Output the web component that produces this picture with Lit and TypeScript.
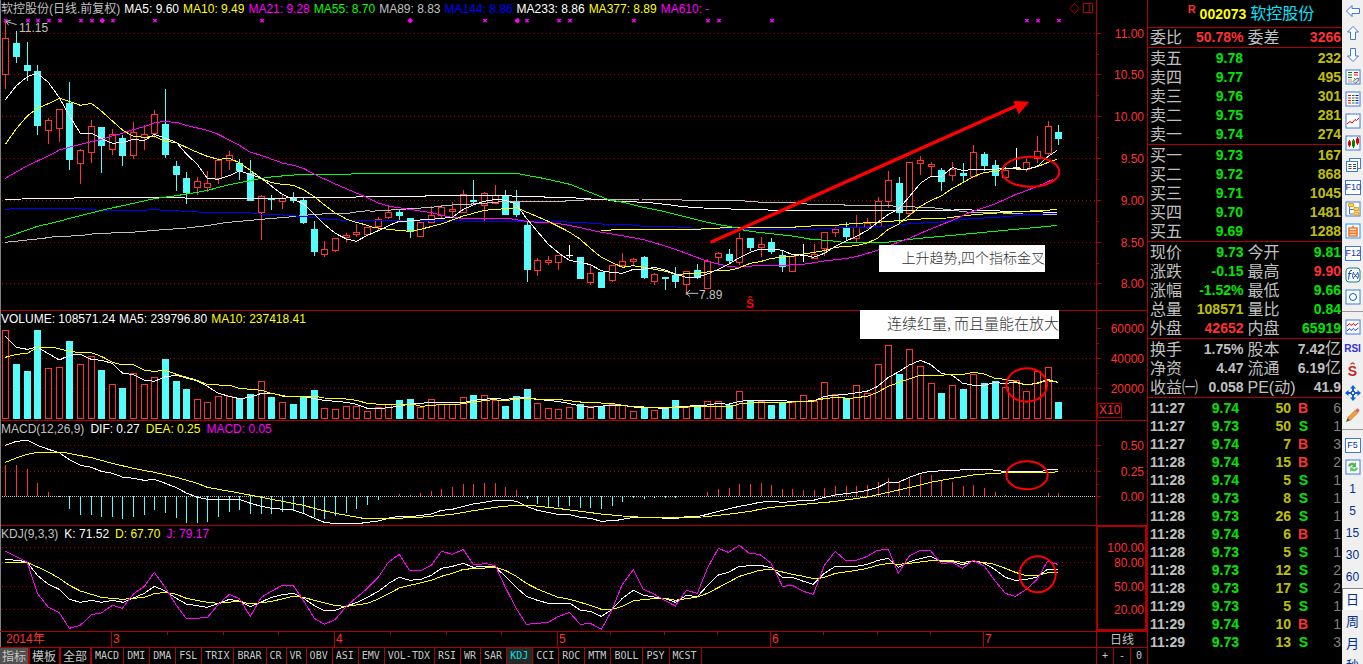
import { LitElement, html, svg, css } from 'lit';
import { customElement } from 'lit/decorators.js';
import { classMap } from 'lit/directives/class-map.js';

/* Every plot is drawn on a grid of three units to the pixel. */
const PLOT_W = 3288;
const barX = (i: number) => Math.floor(5.913 + 10.636 * i) * 3 + 1.5;

type Kind = 'r' | 'c' | 'w';
/* kind, high, body top, body bottom, low */
type Candle = [Kind, number, number, number, number];

const CANDLES: Candle[] = [
  ['r', 65, 115, 223, 266], ['c', 94, 130, 170, 188], ['c', 126, 195, 212, 242], ['c', 195, 213, 377, 404],
  ['r', 354, 361, 391, 431], ['r', 328, 328, 385, 425], ['c', 246, 309, 479, 509], ['r', 448, 451, 490, 551],
  ['r', 360, 379, 457, 488], ['c', 381, 381, 437, 518], ['r', 388, 403, 448, 464], ['c', 406, 415, 467, 497],
  ['r', 366, 397, 466, 476], ['r', 375, 403, 412, 449], ['r', 330, 343, 401, 413], ['c', 267, 373, 464, 473],
  ['c', 483, 498, 524, 572], ['c', 516, 534, 580, 611], ['r', 531, 544, 562, 584], ['r', 513, 550, 562, 577],
  ['r', 475, 482, 535, 551], ['r', 453, 466, 481, 509], ['c', 477, 489, 514, 539], ['c', 480, 519, 602, 602],
  ['r', 585, 589, 637, 719], ['c', 585, 594, 599, 629], ['r', 585, 595, 604, 626], ['c', 576, 592, 602, 608],
  ['c', 594, 600, 668, 671], ['c', 663, 687, 755, 767], ['r', 723, 748, 764, 770], ['r', 714, 715, 751, 755],
  ['r', 700, 706, 713, 726], ['r', 671, 697, 703, 710], ['r', 682, 683, 703, 706], ['r', 651, 658, 680, 690],
  ['r', 618, 637, 653, 656], ['c', 629, 636, 647, 659], ['c', 654, 654, 695, 713], ['r', 667, 667, 709, 709],
  ['r', 618, 646, 668, 670], ['r', 621, 622, 647, 653], ['r', 606, 628, 635, 653], ['r', 570, 583, 637, 640],
  ['c', 540, 600, 605, 614], ['r', 576, 580, 616, 662], ['r', 555, 585, 611, 613], ['c', 570, 585, 644, 644],
  ['c', 570, 604, 644, 650], ['c', 666, 675, 809, 846], ['r', 775, 781, 811, 829], ['r', 768, 781, 788, 794],
  ['r', 765, 766, 788, 809], ['w', 735, 766, 766, 775], ['c', 771, 771, 836, 836], ['r', 795, 820, 847, 854],
  ['c', 816, 816, 863, 863], ['r', 796, 796, 841, 847], ['r', 759, 784, 796, 803], ['r', 773, 778, 784, 796],
  ['c', 768, 771, 833, 836], ['r', 818, 823, 845, 854], ['c', 831, 831, 838, 869], ['c', 801, 825, 845, 863],
  ['r', 814, 814, 853, 875], ['c', 792, 810, 833, 837], ['r', 778, 784, 865, 866], ['r', 756, 760, 773, 794],
  ['c', 747, 763, 783, 790], ['r', 700, 715, 787, 794], ['c', 714, 714, 743, 754], ['r', 711, 734, 742, 770],
  ['c', 714, 726, 755, 762], ['c', 753, 765, 800, 815], ['r', 768, 768, 814, 814], ['w', 732, 766, 766, 785],
  ['r', 732, 762, 776, 777], ['r', 697, 697, 745, 768], ['r', 682, 688, 698, 710], ['c', 666, 681, 710, 719],
  ['r', 645, 682, 716, 728], ['r', 655, 671, 683, 686], ['r', 591, 604, 680, 680], ['r', 513, 541, 605, 623],
  ['c', 531, 549, 638, 671], ['r', 487, 487, 640, 647], ['r', 468, 481, 490, 524], ['r', 486, 493, 499, 532],
  ['c', 504, 510, 545, 572], ['r', 487, 508, 527, 542], ['c', 489, 519, 528, 545], ['r', 435, 457, 530, 530],
  ['c', 456, 462, 498, 512], ['c', 480, 495, 528, 557], ['r', 500, 512, 532, 534], ['w', 444, 502, 502, 508],
  ['r', 476, 487, 508, 515], ['r', 408, 454, 475, 490], ['r', 363, 379, 461, 468], ['c', 375, 396, 417, 434],
];

const VOLUME_TOPS = [
  61, 162, 183, 60, 175, 172, 93, 163, 139, 180, 223, 234, 190, 223, 202, 147, 213, 237, 268, 277,
  259, 258, 267, 252, 214, 261, 277, 282, 262, 240, 295, 298, 289, 289, 304, 292, 283, 270, 267, 292,
  268, 283, 283, 262, 255, 256, 270, 288, 258, 237, 280, 295, 298, 292, 282, 290, 288, 283, 286, 304,
  291, 301, 294, 270, 292, 285, 274, 274, 285, 244, 273, 274, 285, 278, 277, 256, 274, 217, 253, 264,
  226, 250, 163, 106, 192, 118, 169, 220, 249, 226, 237, 193, 219, 213, 232, 211, 244, 184, 172, 276,
];
const VOLUME_DOWN = new Set([
  1, 2, 3, 6, 9, 11, 15, 16, 17, 22, 23, 25, 27, 28, 29, 37, 38, 44, 47, 48, 49, 54, 56, 60, 62, 63, 65,
  68, 70, 72, 73, 79, 84, 88, 90, 92, 93, 99,
]);

const MACD_ENDS = [
  465, 465, 477, 519, 546, 560, 597, 615, 615, 621, 621, 627, 621, 615, 600, 609, 624, 639, 639, 636,
  621, 606, 600, 612, 612, 612, 606, 603, 609, 621, 627, 618, 609, 597, 585, 570, 559, 552, 555, 549,
  543, 537, 531, 521, 521, 519, 519, 531, 540, 567, 582, 592, 591, 588, 594, 594, 597, 588, 576, 564,
  567, 563, 564, 563, 559, 557, 546, 537, 534, 521, 521, 519, 525, 537, 537, 540, 540, 534, 528, 528,
  528, 525, 516, 504, 513, 504, 495, 495, 511, 516, 528, 525, 534, 546, 555, 559, 559, 557, 549, 549,
];

/* A curve is stored in sections, each with its own x origin. */
type Section = [number, string];
const curve = (...sections: Section[]): string => {
  const out: string[] = [];
  let last = -1;
  for (const [origin, text] of sections) {
    for (const pair of text.split(' ')) {
      const [x, y] = pair.split(',').map(Number);
      if (x + origin <= last) continue;
      last = x + origin;
      out.push(`${last},${y}`);
    }
  }
  return out.join(' ');
};

interface Line { tone: string; points: string; }

const PRICE_LINES: Line[] = [
  { tone: 'silver', points: curve(
    [0, '16,727 130,715 163,710 240,707 290,700 380,698 478,690 560,684 622,677 676,668 751,661 830,654 890,649 940,643 1050,639 1080,634 1109,632'],
    [1110, '0,634 80,629 184,622 230,616 280,613 330,611 406,604 580,604 600,601 730,598 810,597 930,598 940,601 1105,601'],
    [2220, '0,602 80,608 175,609 210,613 300,613 320,616 445,616 475,620 570,622 600,626 640,631 690,637 730,637 820,640 865,643 952,643']) },
  { tone: 'white', points: curve(
    [0, '16,598 65,597 70,595 220,595 230,592 545,592 560,595 840,595 895,592 1050,592 1109,589'],
    [1110, '0,589 165,589 170,586 420,586 430,589 510,589 530,592 610,592 625,596 700,598 740,604 830,607 895,614 940,620 1000,624 1060,626 1105,628'],
    [2220, '0,628 75,628 90,631 620,631 690,628 700,631 820,634 952,637']) },
  { tone: 'blue', points: curve(
    [0, '16,628 60,625 220,625 300,631 430,631 450,629 510,631 610,637 730,637 780,642 850,645 940,652 980,658 1040,661 1109,662'],
    [1110, '0,662 540,664 640,668 710,673 780,674 820,679 890,679 980,685 1105,688'],
    [2220, '0,688 220,688 250,685 370,682 440,678 500,672 600,666 680,657 800,650 870,643 952,641']) },
  { tone: 'yellow', points: curve(
    [1110, '694,692 740,689 990,688 1000,685 1105,683'],
    [2220, '0,683 160,682 180,679 285,676 350,670 410,667 500,660 570,655 620,654 680,646 730,642 830,635 952,629']) },
  { tone: 'green', points: curve(
    [0, '16,713 112,679 178,664 208,655 274,639 304,631 400,610 463,596 529,587 592,577 622,571 688,554 751,542 784,535 820,530 895,524 1050,524 1055,521 1109,520'],
    [1110, '0,520 440,520 470,526 520,535 600,553 660,577 715,599 760,607 820,622 880,634 916,643 1012,667 1075,679 1105,684'],
    [2220, '0,688 31,694 94,701 157,708 220,719 265,721 310,727 440,727 508,718 571,712 637,706 700,700 763,694 826,688 892,682 952,676']) },
  { tone: 'magenta', points: curve(
    [0, '16,535 82,497 145,468 178,450 241,433 304,418 337,408 370,399 400,389 433,380 463,369 490,364 535,368 559,376 622,391 655,403 718,436 751,457 784,466 847,489 880,496 910,505 943,523 1006,552 1069,579 1109,596'],
    [1110, '25,609 60,619 118,628 184,638 247,653 310,656 420,656 469,664 502,667 540,668 580,673 631,683 694,697 757,707 820,719 853,728 916,748 1012,784 1075,799 1105,802'],
    [2220, '0,801 61,796 127,796 190,793 253,783 316,776 349,770 412,751 475,727 508,715 541,700 604,674 637,661 690,637 763,613 826,584 859,572 892,559 940,538']) },
  { tone: 'yellow', points: curve(
    [0, '16,433 49,386 82,348 112,325 145,311 178,295 208,304 241,316 274,310 304,333 337,363 370,392 400,409 433,412 463,409 496,424 529,428 559,442 592,457 622,469 655,478 688,475 718,488 751,511 784,535 814,548 847,553 880,556 910,569 943,590 973,615 1006,639 1039,657 1069,667 1102,676'],
    [1110, '0,680 25,684 55,688 118,694 151,688 214,672 280,648 343,631 406,626 439,623 469,636 535,664 598,696 631,718 661,745 694,772 757,802 790,797 820,802 886,814 916,823 982,820 1045,811 1075,811 1105,805'],
    [2220, '0,802 31,790 61,785 94,775 157,769 190,762 253,752 286,742 349,737 382,729 412,715 445,688 475,673 508,646 541,619 571,602 604,588 637,565 667,549 700,530 733,517 763,515 796,506 859,508 892,500 922,488 952,478']) },
  { tone: 'white', points: curve(
    [0, '16,299 49,257 82,230 112,220 145,247 178,293 208,347 241,400 274,400 304,415 337,430 370,427 400,418 433,422 463,403 496,415 529,427 559,462 592,493 622,535 655,538 688,527 718,512 751,523 784,535 814,558 847,583 880,598 910,611 943,643 973,673 1006,700 1039,717 1069,724 1102,706'],
    [1110, '30,690 55,677 85,665 135,661 184,658 214,655 247,652 280,628 310,615 343,604 376,598 406,601 439,612 469,655 502,694 535,733 565,758 598,781 631,787 661,794 694,812 724,817 757,820 790,808 820,808 853,802 886,810 916,822 949,832 982,832 1012,822 1045,808 1075,793 1105,775'],
    [2220, '0,772 31,757 61,747 94,747 127,751 157,764 190,765 220,772 253,760 286,739 316,724 349,709 382,691 412,668 445,643 475,628 508,590 541,550 571,530 604,529 637,503 670,512 700,508 763,508 796,504 859,508 892,499 922,471 952,451']) },
];

const VOLUME_LINES: Line[] = [
  { tone: 'white', points: curve(
    [0, '16,79 49,112 82,118 112,111 145,131 178,150 208,136 241,133 274,148 304,151 337,160 367,189 400,194 433,210 463,214 496,200 529,196 559,204 592,213 622,229 655,250 688,259 718,266 751,262 784,250 814,249 847,258 880,261 910,259 943,266 973,271 1006,274 1039,277 1069,283 1102,295 1150,295 1168,292'],
    [1170, '28,289 60,282 91,280 124,277 225,277 250,271 310,265 346,268 409,262 442,268 502,274 535,280 570,288 601,292 660,286 700,286 730,291 826,295 856,291 889,289 922,286 952,285 985,280 1015,283 1048,274 1081,271 1109,271'],
    [2280, '0,271 70,271 97,276 160,274 193,259 256,253 320,244 352,230 385,202 415,186 448,165 481,151 511,163 544,190 577,196 607,219 640,226 673,226 703,218 736,220 766,217 799,225 832,219 862,208 893,217']) },
  { tone: 'yellow', points: curve(
    [0, '16,142 49,133 82,130 112,112 160,112 208,124 240,128 274,128 304,139 337,157 360,163 400,164 433,181 463,184 496,181 529,193 592,211 622,224 690,226 718,235 784,241 814,250 860,259 943,258 973,264 1039,267 1069,271 1102,280 1140,283 1168,283'],
    [1170, '70,283 95,289 150,284 204,283 265,274 310,269 343,272 379,268 409,265 442,268 520,270 580,277 660,280 700,286 730,290 826,293 930,290 1020,290 1048,282 1109,276'],
    [2280, '0,277 80,277 160,272 193,266 226,262 270,265 322,259 352,247 385,229 415,218 481,196 540,196 577,193 610,193 640,187 673,192 703,204 740,209 766,214 799,225 832,220 862,212 893,217']) },
];

const MACD_LINES: Line[] = [
  { tone: 'white', points: curve(
    [0, '16,406 49,394 82,391 112,406 145,418 178,428 208,449 241,466 274,472 304,484 337,490 367,501 400,505 433,511 463,508 496,520 529,533 559,549 592,562 622,568 718,568 751,580 784,589 814,595 880,600 910,610 943,625 973,637 1000,640 1080,640 1135,633 1168,624'],
    [1170, '28,619 70,619 124,612 154,601 187,598 220,589 250,582 283,577 316,571 360,571 379,574 409,589 442,601 502,613 540,614 571,622 601,625 634,634 680,631 730,622 860,625 889,620 922,620 952,613 985,604 1048,589 1081,583 1109,577'],
    [2280, '30,574 70,577 130,571 160,571 193,562 226,555 289,547 322,541 352,533 385,516 415,517 448,502 481,490 511,484 560,482 640,478 690,479 740,485 840,486 862,478 893,478']) },
  { tone: 'yellow', points: curve(
    [0, '16,457 49,444 82,433 112,427 200,429 274,443 337,460 400,475 463,487 529,502 592,520 622,532 718,549 784,562 847,574 910,586 943,595 1006,610 1090,625 1168,626'],
    [1170, '100,621 187,613 250,602 330,590 379,586 430,587 502,595 571,604 634,612 697,618 760,622 940,621 1020,612 1081,604 1109,598'],
    [2280, '34,592 97,586 220,575 322,561 385,547 481,525 511,517 577,505 640,495 700,490 766,487 880,487 893,484']) },
];

const KDJ_LINES: Line[] = [
  { tone: 'white', points: curve(
    [0, '16,748 60,752 82,757 112,796 145,823 178,838 208,868 241,877 274,871 304,877 337,871 370,877 400,864 433,850 463,829 496,843 529,865 559,882 622,892 655,880 688,868 718,873 751,890 784,876 814,862 847,854 880,850 910,864 943,887 973,902 1006,901 1040,888 1069,878 1102,862 1135,844 1168,819'],
    [1170, '28,802 60,811 95,807 124,796 154,775 187,769 220,760 250,772 283,768 316,771 346,799 379,832 409,859 442,871 475,880 540,880 571,901 601,904 634,919 664,900 697,865 730,841 760,856 826,866 856,877 889,856 922,860 952,827 985,795 1015,787 1048,769 1111,766'],
    [2280, '34,773 67,802 97,802 130,814 160,823 193,790 226,769 289,769 322,763 352,752 385,745 415,772 448,755 481,746 511,739 544,754 577,755 607,764 640,754 673,760 703,777 736,802 766,811 799,808 832,801 862,778 893,778']) },
  { tone: 'yellow', points: curve(
    [0, '16,757 82,757 145,786 178,805 208,826 241,843 304,862 367,868 433,862 463,851 496,847 529,853 559,865 622,877 655,880 720,873 740,880 780,879 820,873 880,859 910,862 943,871 1006,887 1040,889 1102,880 1135,867 1168,850'],
    [1170, '28,834 60,826 124,811 154,799 187,790 220,778 316,772 346,781 379,799 409,820 442,837 502,861 540,868 601,886 634,898 670,897 700,888 730,872 790,866 826,865 856,871 922,861 952,850 1015,817 1048,799 1109,781'],
    [2280, '34,778 97,793 130,799 165,807 193,802 226,790 289,781 322,775 352,766 385,760 415,763 448,760 511,752 577,752 607,757 640,754 670,757 703,763 736,775 766,787 799,797 832,796 862,789 893,787']) },
  { tone: 'magenta', points: curve(
    [0, '16,724 49,740 82,757 112,850 145,892 178,908 208,955 241,946 274,914 304,909 337,886 367,895 400,852 433,829 463,787 496,833 529,886 559,926 622,923 655,883 688,853 718,866 751,919 784,862 814,844 847,826 880,826 910,871 943,925 973,943 1006,928 1040,888 1102,835 1135,802 1165,757'],
    [1170, '28,733 58,781 94,781 124,766 154,724 187,733 220,718 250,764 290,761 316,767 346,832 379,896 409,943 475,937 502,921 538,907 571,943 601,940 634,958 664,904 697,823 730,779 760,838 790,851 826,872 856,888 889,841 922,850 952,775 985,715 1015,727 1048,706 1078,730 1109,733'],
    [2280, '34,760 67,829 97,826 130,844 160,853 193,766 226,724 256,751 289,751 322,739 352,721 385,718 415,790 448,738 481,721 511,721 544,761 577,757 607,775 640,751 673,768 703,810 736,850 766,859 799,838 832,808 862,754 893,763']) },
];

/* Event marks along the top of the price plot: x, large */
const MARKS: [number, boolean][] = [
  [84, false], [114, false], [147, false], [180, false], [243, false], [276, false], [307, true],
  [339, false], [465, false], [786, false], [1231, true], [1455, false], [1552, true], [1581, false],
  [1677, false], [1710, false], [1902, false], [2124, false], [2157, false], [2316, false],
  [3081, false], [3114, false], [3177, false],
];

interface Reading { text: string; tone: string; }
interface Scale { label: string; at: number; }
interface Pane {
  id: string;
  top: number;
  height: number;
  grid: number[];
  ticks: number[];
  minor: number[];
  scale: Scale[];
  readings: Reading[];
}

const PANES: Pane[] = [
  {
    id: 'price', top: 0, height: 930,
    grid: [100, 223, 349, 475, 601, 727, 850],
    ticks: [100, 223, 349, 475, 601, 727, 850],
    minor: [163, 286, 412, 538, 664, 790],
    scale: [
      { label: '11.00', at: 100 }, { label: '10.50', at: 223 }, { label: '10.00', at: 349 },
      { label: '9.50', at: 475 }, { label: '9.00', at: 601 }, { label: '8.50', at: 727 }, { label: '8.00', at: 850 },
    ],
    readings: [
      { text: '软控股份(日线.前复权)', tone: 'silver' }, { text: 'MA5: 9.60', tone: 'white' },
      { text: 'MA10: 9.49', tone: 'yellow' }, { text: 'MA21: 9.28', tone: 'magenta' },
      { text: 'MA55: 8.70', tone: 'green' }, { text: 'MA89: 8.83', tone: 'silver' },
      { text: 'MA144: 8.86', tone: 'blue' }, { text: 'MA233: 8.86', tone: 'white' },
      { text: 'MA377: 8.89', tone: 'yellow' }, { text: 'MA610: -', tone: 'magenta' },
    ],
  },
  {
    id: 'volume', top: 0, height: 330,
    grid: [145, 235], ticks: [55, 145, 235], minor: [100, 190],
    scale: [{ label: '60000', at: 55 }, { label: '40000', at: 145 }, { label: '20000', at: 235 }],
    readings: [
      { text: 'VOLUME: 108571.24', tone: 'white' }, { text: 'MA5: 239796.80', tone: 'white' },
      { text: 'MA10: 237418.41', tone: 'yellow' },
    ],
  },
  {
    id: 'macd', top: 330, height: 315,
    grid: [406, 484], ticks: [406, 484, 559], minor: [445, 523],
    scale: [{ label: '0.50', at: 406 }, { label: '0.25', at: 484 }, { label: '0.00', at: 559 }],
    readings: [
      { text: 'MACD(12,26,9)', tone: 'silver' }, { text: 'DIF: 0.27', tone: 'white' },
      { text: 'DEA: 0.25', tone: 'yellow' }, { text: 'MACD: 0.05', tone: 'magenta' },
    ],
  },
  {
    id: 'kdj', top: 645, height: 318,
    grid: [712, 757, 829, 898], ticks: [], minor: [],
    scale: [
      { label: '100.00', at: 712 }, { label: '80.00', at: 757 }, { label: '50.00', at: 829 }, { label: '20.00', at: 898 },
    ],
    readings: [
      { text: 'KDJ(9,3,3)', tone: 'silver' }, { text: 'K: 71.52', tone: 'white' },
      { text: 'D: 67.70', tone: 'yellow' }, { text: 'J: 79.17', tone: 'magenta' },
    ],
  },
];

const polylines = (lines: Line[]) =>
  lines.map((l) => svg`<polyline class="line ${l.tone}" points=${l.points}></polyline>`);

const candleShape = ([kind, high, top, bottom, low]: Candle, i: number) => {
  const x = barX(i);
  const t = top + 1.5;
  const b = Math.max(bottom, top + 1.5) + 1.5;
  if (kind === 'c') {
    return svg`<rect class="down" x=${x - 10.5} y=${top} width="21" height=${bottom - top}></rect>
      <rect class="down" x=${x - 1.5} y=${high} width="3" height=${low - high}></rect>`;
  }
  if (kind === 'w') {
    return svg`<path class="even" d="M${x} ${high}V${low}M${x - 10} ${t}h20"></path>`;
  }
  return svg`<path class="up" d="M${x} ${high}V${t}M${x} ${b}V${low}M${x - 9} ${t - 1}h18V${b - 1}h-18z"></path>`;
};

const volumeShape = (top: number, i: number) => {
  const x = barX(i);
  return VOLUME_DOWN.has(i)
    ? svg`<rect class="down" x=${x - 10.5} y=${top} width="21" height=${327 - top}></rect>`
    : svg`<rect class="up" x=${x - 9} y=${top + 0.5} width="18" height=${325 - top}></rect>`;
};

const macdShape = (end: number, i: number) => {
  const x = barX(i) - 1.5;
  return end < 559
    ? svg`<rect class="hist-up" x=${x} y=${end} width="3" height=${559 - end}></rect>`
    : svg`<rect class="down" x=${x} y="559" width="3" height=${end - 559}></rect>`;
};

@customElement('chart-pane')
class ChartPane extends LitElement {
  static properties = { pane: { attribute: false } };
  declare pane: Pane;

  static styles = css`
    :host { display: grid; grid-template-columns: minmax(0, 1fr) 51px; min-height: 0; background: #000; }
    .plot, .axis { position: relative; min-height: 0; min-width: 0; }
    .axis { overflow: hidden; }
    svg.fill { position: absolute; inset: 0; width: 100%; height: 100%; display: block; }
    .readings { position: absolute; top: 1px; left: 1px; display: flex; gap: 4px; font-size: 12px; line-height: 16px; white-space: pre; }
    .macd, .kdj { gap: 6px; }
    .silver { color: #c0c0c0; stroke: #c0c0c0; }
    .white { color: #fff; stroke: #fff; }
    .yellow { color: #ff0; stroke: #ff0; }
    .magenta { color: #f0f; stroke: #f0f; }
    .green { color: #0f0; stroke: #0f0; }
    .blue { color: #00f; stroke: #00f; }
    .line { fill: none; stroke-width: 3; }
    svg { shape-rendering: crispEdges; }
    .soft { shape-rendering: auto; }
    .grid { stroke: #b00000; stroke-width: 3; stroke-dasharray: 3 9; }
    .zero { stroke: #c0c0c0; stroke-width: 3; stroke-dasharray: 3 3; }
    .up { fill: #000; stroke: #ff3232; stroke-width: 3; }
    .down { fill: #54fcfc; }
    .even { stroke: #fff; stroke-width: 3; }
    .hist-up { fill: #ff3232; }
    .rule { fill: #b00000; }
    .edge { fill: #808080; }
    .mark { stroke: #f0f; stroke-width: 4; }
    .ring { fill: none; stroke: #f00; stroke-width: 6; }
    .tag { position: absolute; font-size: 12px; line-height: 14px; color: #c0c0c0; }
    .ex { position: absolute; color: #f00; font-size: 12px; line-height: 14px; font-weight: bold; transform: translate(-50%, 0); }
    .scale { position: absolute; right: 3px; color: #ff3232; font-size: 12px; line-height: 14px; margin-top: -6px; }
    .unit { position: absolute; left: 1px; bottom: 2px; border: 1px solid #b00000; color: #ff3232; font-size: 12px; line-height: 13px; padding: 0 1px; }
    .framed { box-shadow: inset 0 0 0 2px #b00000; }
    .note { position: absolute; background: #fff; color: #333; overflow: hidden; white-space: pre; text-align: right; font-family: "Noto Sans CJK SC", sans-serif; font-weight: 300; }
    .trend { font-size: 14px; line-height: 24px; height: 27px; width: 166px; }
    .surge { font-size: 15px; line-height: 26px; height: 29px; width: 199px; }
    .tools { position: absolute; right: 2px; top: 2px; display: flex; gap: 3px; }
    button { background: none; border: 0; padding: 0; display: block; }
    button svg { display: block; }
  `;

  private pct(y: number) {
    return ((y - this.pane.top) / this.pane.height) * 100;
  }

  private series() {
    switch (this.pane.id) {
      case 'price':
        return svg`${CANDLES.map(candleShape)}${polylines(PRICE_LINES)}
          ${MARKS.map(([x, big]) => svg`<path class="mark soft" d="M${x - 5} 57l10 10M${x + 5} 57l-10 10${big ? `M${x} 55v14M${x - 7} 62h14` : ''}"></path>`)}
          <path class="mark soft" d="M12 57l10 10M22 57l-10 10"></path>
          <path class="line silver soft" d="M18 64L50 74M18 64l14 -3M18 64l8 12"></path>
          <path class="line silver soft" d="M2059 880H2095M2070 870L2059 880L2070 890M2059 876v8"></path>
          <path d="M2132 727L3048 318" stroke="#f00" stroke-width="10" class="soft"></path>
          <path d="M3040 303L3088 305L3056 343Z" fill="#f00" class="soft"></path>
          <ellipse class="ring soft" cx="3092" cy="515" rx="86" ry="45"></ellipse>`;
      case 'volume':
        return svg`${VOLUME_TOPS.map(volumeShape)}${polylines(VOLUME_LINES)}
          <ellipse class="ring soft" cx="3080" cy="225" rx="61" ry="50"></ellipse>`;
      case 'macd':
        return svg`<path class="zero" d="M6 559.5H${PLOT_W}"></path>${MACD_ENDS.map(macdShape)}${polylines(MACD_LINES)}
          <ellipse class="ring soft" cx="3081" cy="496" rx="62" ry="42"></ellipse>`;
      default:
        return svg`${polylines(KDJ_LINES)}
          <ellipse class="ring soft" cx="3113" cy="793" rx="54" ry="54"></ellipse>`;
    }
  }

  private overlays() {
    if (this.pane.id === 'price') {
      return html`
        <span class="tag" style="left:${(19 / 1096) * 100}%;top:${this.pct(63)}%">11.15</span>
        <span class="tag" style="left:${(699 / 1096) * 100}%;top:${this.pct(863)}%">7.89</span>
        <span class="ex" style="left:${(750 / 1096) * 100}%;top:${this.pct(891)}%">Ŝ</span>
        <div class="note trend" style="left:${(879 / 1096) * 100}%;top:${this.pct(735)}%">上升趋势,四个指标金叉</div>
        <div class="tools">
          <button aria-label="marker"><svg width="11" height="13" viewBox="0 0 11 13"><path class="soft" d="M5.500 1.500L10 6.500L5.500 11.500L1 6.500Z" fill="none" stroke="#b00000"></path></svg></button>
          <button aria-label="split"><svg width="11" height="13" viewBox="0 0 11 13"><path d="M.5 1.500h9v9h-9zM6.500 1.500v9" fill="none" stroke="#b00000"></path></svg></button>
        </div>`;
    }
    if (this.pane.id === 'volume') {
      return html`<div class="note surge" style="left:${(860 / 1096) * 100}%;top:0%">连续红量, 而且量能在放大</div>`;
    }
    return '';
  }

  render() {
    const p = this.pane;
    const rule = p.id === 'price' ? '' : svg`<rect class="rule" x="0" y=${p.top} width=${PLOT_W} height="3"></rect>`;
    return html`
      <div class="plot">
        <svg class="fill" viewBox="0 ${p.top} ${PLOT_W} ${p.height}" preserveAspectRatio="none">
          ${p.grid.map((y) => svg`<path class="grid" d="M6 ${y + 0.5}H${PLOT_W}"></path>`)}
          ${this.series()}
          ${rule}
          <rect class="edge" x="0" y=${p.top} width="2" height=${p.height}></rect>
        </svg>
        <div class="readings ${p.id}">${p.readings.map((r) => html`<span class=${r.tone}>${r.text}</span>`)}</div>
        ${this.overlays()}
      </div>
      <div class=${classMap({ axis: true, framed: p.id === 'kdj' })}>
        <svg class="fill" viewBox="0 ${p.top} 153 ${p.height}" preserveAspectRatio="none">
          <rect class="rule" x="0" y=${p.top} width="3" height=${p.height}></rect>
          ${p.id === 'price' ? '' : svg`<rect class="rule" x="0" y=${p.top} width="153" height="3"></rect>`}
          ${p.ticks.map((y) => svg`<rect class="rule" x="0" y=${y - 1} width="16" height="3"></rect>`)}
          ${p.minor.map((y) => svg`<rect class="rule" x="0" y=${y - 1} width="10" height="3"></rect>`)}
        </svg>
        ${p.scale.map((s) => html`<span class="scale" style="top:${this.pct(s.at)}%">${s.label}</span>`)}
        ${p.id === 'volume' ? html`<span class="unit">X10</span>` : ''}
      </div>`;
  }
}

/* Weeks on the date row: width and, where a month begins, its label */
const WEEKS: [number, string][] = [
  [111, '2014年'], [56, '3'], [56, ''], [55, ''], [56, '4'], [56, ''], [56, ''], [55, ''], [56, '5'], [53, ''],
  [54, ''], [53, ''], [53, '6'], [53, ''], [54, ''], [53, ''], [53, '7'], [113, ''],
];

@customElement('date-row')
class DateRow extends LitElement {
  static styles = css`
    :host { display: grid; grid-template-columns: minmax(0, 1fr) 51px; background: #000; box-shadow: inset 1px 0 #808080; }
    .weeks { display: grid; border-top: 1px solid #b00000; min-width: 0; }
    .week { min-width: 0; white-space: nowrap; color: #ff3232; font-size: 12px; line-height: 15px; background: linear-gradient(#b00000, #b00000) no-repeat 0 0 / 1px 3px; }
    .week.month { border-left: 1px solid #b00000; padding-left: 1px; background: none; }
    .week.month.year { border-left: 0; padding-left: 6px; }
    .period { border: 1px solid #b00000; border-width: 1px 0 0 1px; background: #000; color: #c0c0c0; font-size: 12px; line-height: 14px; padding: 0; text-align: center; font-family: inherit; }
  `;
  render() {
    const columns = DATE_SPANS.map((w) => `minmax(0,${w}fr)`).join(' ');
    return html`
      <div class="weeks" style="grid-template-columns:${columns}">
        ${DATE_LABELS.map((label, i) => html`<span class=${classMap({ week: true, month: !!label, year: i === 0 })}>${label}</span>`)}
      </div>
      <button class="period">日线</button>`;
  }
}
/* The first month holds four weekly ticks, May and June four, July runs to the edge. */
const DATE_STARTS: [number, string][] = [
  [0, '2014年'], [111, '3'], [167, ''], [223, ''], [278, ''], [334, '4'], [390, ''], [446, ''], [501, ''],
  [557, '5'], [610, ''], [664, ''], [717, ''], [770, '6'], [823, ''], [877, ''], [930, ''], [983, '7'],
];
const DATE_SPANS = DATE_STARTS.map(([x], i) => (i + 1 < DATE_STARTS.length ? DATE_STARTS[i + 1][0] : 1096) - x);
const DATE_LABELS = DATE_STARTS.map(([, label]) => label);

const TABS = ['指标', '模板', '全部', 'MACD', 'DMI', 'DMA', 'FSL', 'TRIX', 'BRAR', 'CR', 'VR', 'OBV', 'ASI', 'EMV',
  'VOL-TDX', 'RSI', 'WR', 'SAR', 'KDJ', 'CCI', 'ROC', 'MTM', 'BOLL', 'PSY', 'MCST'];

@customElement('tab-row')
class TabRow extends LitElement {
  static styles = css`
    :host { display: grid; grid-template-columns: minmax(0, 1fr) 51px; background: #000; }
    nav, .zoom { display: flex; border-top: 1px solid #b00000; min-width: 0; overflow: hidden; }
    .zoom { border-left: 1px solid #b00000; }
    button { border: 0; border-right: 1px solid #b00000; background: #000; color: #c8c8c8; padding: 0 4px 0 3px; margin: 0; font: 10px/16px "DejaVu Sans Mono", monospace; white-space: nowrap; }
    .cjk { font: 12px/16px "Noto Sans CJK SC", sans-serif; border-right-width: 2px; padding: 0 3px 0 2px; }
    .first { background: #505050; padding: 0 2px; }
    .on { background: #282828; color: #00e0e0; }
    .zoom button { flex: 1; padding: 0; }
    .zoom button:last-child { border-right: 0; }
  `;
  render() {
    return html`
      <nav>${TABS.map((t, i) => html`<button class=${classMap({ cjk: i < 3, first: i === 0, on: t === 'KDJ' })}>${t}</button>`)}</nav>
      <div class="zoom"><button>+</button><button>-</button><button>0</button></div>`;
  }
}

type Quote = [string, string, string];
const ASKS: Quote[] = [['卖五', '9.78', '232'], ['卖四', '9.77', '495'], ['卖三', '9.76', '301'], ['卖二', '9.75', '281'], ['卖一', '9.74', '274']];
const BIDS: Quote[] = [['买一', '9.73', '167'], ['买二', '9.72', '868'], ['买三', '9.71', '1045'], ['买四', '9.70', '1481'], ['买五', '9.69', '1288']];
/* label, value, tone */
type Fact = [string, string, string];
const RATIO: Fact[] = [['委比', '50.78%', 'red'], ['委差', '3266', 'red']];
const SUMMARY: Fact[] = [
  ['现价', '9.73', 'green'], ['今开', '9.81', 'green'], ['涨跌', '-0.15', 'green'], ['最高', '9.90', 'red'],
  ['涨幅', '-1.52%', 'green'], ['最低', '9.66', 'green'], ['总量', '108571', 'olive'], ['量比', '0.84', 'green'],
  ['外盘', '42652', 'red'], ['内盘', '65919', 'green'],
];
const COMPANY: Fact[] = [
  ['换手', '1.75%', 'silver'], ['股本', '7.42亿', 'silver'], ['净资', '4.47', 'silver'], ['流通', '6.19亿', 'silver'],
  ['收益㈠', '0.058', 'silver'], ['PE(动)', '41.9', 'silver'],
];
type Trade = [string, string, string, string, string];
const TRADES: Trade[] = [
  ['11:27', '9.74', '50', 'B', '6'], ['11:27', '9.73', '50', 'S', '1'], ['11:27', '9.74', '7', 'B', '3'],
  ['11:28', '9.74', '15', 'B', '2'], ['11:28', '9.74', '5', 'S', '1'], ['11:28', '9.73', '8', 'S', '1'],
  ['11:28', '9.73', '26', 'S', '1'], ['11:28', '9.74', '6', 'B', '1'], ['11:28', '9.73', '5', 'S', '1'],
  ['11:28', '9.73', '12', 'S', '2'], ['11:28', '9.73', '17', 'S', '2'], ['11:29', '9.73', '5', 'S', '1'],
  ['11:29', '9.74', '10', 'B', '1'], ['11:29', '9.73', '13', 'S', '3'],
];

@customElement('quote-panel')
class QuotePanel extends LitElement {
  static styles = css`
    :host { display: flex; flex-direction: column; min-height: 0; overflow: hidden; background: #000; color: #c0c0c0; border-left: 1px solid #b00000; font-size: 14px; font-weight: bold; }
    header { display: flex; justify-content: center; align-items: center; gap: 4px; height: 27px; padding-left: 12px; box-sizing: border-box; }
    sup { color: #ff3232; font-size: 11px; line-height: 12px; align-self: flex-start; margin-top: 3px; }
    .code { color: #ff0; }
    h1 { margin: 0; font-size: 16px; line-height: 24px; font-weight: 400; color: #00e5ff; }
    dl, section { margin: 0; border-top: 1px solid #b00000; }
    section { padding-top: 1px; }
    dl { display: grid; grid-template-columns: 1fr 1fr; column-gap: 4px; grid-auto-rows: 19px; padding: 0 1px 0 2px; }
    dl.pad { padding-top: 1px; }
    dl.long { padding-bottom: 1px; }
    dl div { display: flex; justify-content: space-between; align-items: center; min-width: 0; }
    dt, th { font-size: 16px; font-weight: 400; line-height: 19px; white-space: nowrap; }
    dd { margin: 0; line-height: 19px; white-space: nowrap; }
    i { font-style: normal; font-weight: 400; font-size: 16px; line-height: 16px; }
    table { width: 100%; table-layout: fixed; border-spacing: 0; padding: 0 1px 0 2px; box-sizing: border-box; }
    th, td { padding: 0; text-align: right; height: 19px; line-height: 19px; white-space: nowrap; }
    th { text-align: left; width: 34px; }
    .px { width: 59px; color: #00e600; }
    .trades td { height: 18px; line-height: 18px; }
    .trades .time { width: 40px; text-align: left; color: #c0c0c0; }
    .trades .px { width: 49px; }
    .trades .qty { width: 52px; }
    .trades .side { width: 17px; text-align: right; }
    .trades .count { color: #808080; font-weight: 400; }
    .red { color: #ff3232; }
    .green { color: #00e600; }
    .olive, .qty { color: #c0c000; }
    .silver { color: #c0c0c0; }
  `;
  private facts(list: Fact[], pad: boolean) {
    return html`<dl class=${classMap({ pad })}>
      ${list.map(([k, v, tone]) => html`<div><dt>${k}</dt><dd class=${tone}>${v.endsWith('亿') ? html`${v.slice(0, -1)}<i>亿</i>` : v}</dd></div>`)}
    </dl>`;
  }
  private book(list: Quote[]) {
    return html`<section><table>
      ${list.map(([k, px, qty]) => html`<tr><th scope="row">${k}</th><td class="px">${px}</td><td class="qty">${qty}</td></tr>`)}
    </table></section>`;
  }
  render() {
    return html`
      <header><sup>R</sup><span class="code">002073</span><h1>软控股份</h1></header>
      ${this.facts(RATIO, false)}
      ${this.book(ASKS)}
      ${this.book(BIDS)}
      ${this.facts(SUMMARY, true)}
      ${this.facts(COMPANY, true)}
      <section><table class="trades">
        ${TRADES.map(([t, px, qty, side, n]) => html`<tr>
          <td class="time">${t}</td><td class="px">${px}</td><td class="qty">${qty}</td>
          <td class="side ${side === 'B' ? 'red' : 'green'}">${side}</td><td class="count">${n}</td></tr>`)}
      </table></section>`;
  }
}

const frame = svg`<rect x="1" y="1" width="14" height="14" fill="#fff" stroke="#3c78e0"></rect>`;
const lettered = (s: string) => html`<span class="box">${s}</span>`;
const pic = (body: unknown) => html`<svg width="16" height="16" viewBox="0 0 16 16">${body}</svg>`;
const arrow = (turn: number) => pic(svg`<path d="M1.500 8L7 2.500V5.500H14.500V10.500H7V13.500Z" transform="rotate(${turn} 8 8)" fill="#fff" stroke="#3c78e0"></path>`);

const TOOLS: [string, unknown][] = [
  ['back', arrow(0)],
  ['up', arrow(90)],
  ['down', arrow(270)],
  ['quotes', pic(svg`${frame}<path d="M3 3.500h4M3 6h4M3 8.500h4" stroke="#008000"></path><path d="M9 3.500h4M9 6h4" stroke="#f00"></path><path d="M3 11h4M3 13h4" stroke="#999"></path><path d="M8 12.500l3 -3 3 0 -1 3 -3 2zM9 9l2 2" fill="#ddd" stroke="#777"></path>`)],
  ['table', pic(svg`${frame}<path d="M3 4.500h3M3 7h3M3 9.500h3M3 12h3" stroke="#f00"></path><path d="M7 4.500h2.500M7 7h2.500M7 9.500h2.500M7 12h2.500" stroke="#008000"></path><path d="M10.500 4.500h3M10.500 7h3M10.500 9.500h3M10.500 12h3" stroke="#00f"></path>`)],
  ['intraday', pic(svg`${frame}<path d="M2 11L5 8.500L7 10L10 6.500L11.500 7.500L14 5" fill="none" stroke="#e00000"></path>`)],
  ['candles', pic(svg`${frame}<path d="M4.500 5v7M12.500 2v8" stroke="#e00000"></path><path d="M8.500 4v9" stroke="#008000"></path><path d="M3 6.500h3v4h-3zM11 3.500h3v5h-3z" fill="#e00000"></path><path d="M7 5.500h3v6h-3z" fill="#008000"></path>`)],
  ['windows', pic(svg`<rect x="4.500" y="1.500" width="11" height="10" fill="#fff" stroke="#3c78e0"></rect><rect x="1.500" y="4.500" width="11" height="10" fill="#fff" stroke="#3c78e0"></rect><path d="M3.500 7.500h3M8 7.500h3M3.500 9.500h3M8 9.500h3M3.500 11.500h3M8 11.500h3" stroke="#444"></path>`)],
  ['f10', lettered('F10')],
  ['tree', pic(svg`${frame}<path d="M4.500 6v7h4M5 8.500h4" fill="none" stroke="#3c78e0"></path><path d="M3.500 2.500h5v3h-5zM9 6.500h4.500v3H9zM9 11h4.500v3H9z" fill="#ffd060" stroke="#f0a000"></path>`)],
  ['custom', pic(svg`<rect x="1" y="1" width="14" height="14" fill="#fff" stroke="#1496ff"></rect><path d="M8 2.500v2M4 5h8v8h-8zM4 7.700h8M4 10.400h8" fill="none" stroke="#ff7020" stroke-width="1.600"></path>`)],
  ['f12', lettered('F12')],
  ['formula', pic(svg`<rect x="1" y="1" width="14" height="14" rx="3" fill="#fff" stroke="#108080"></rect><path d="M7 3.500q-2 -1 -2.500 2L3.500 12.500M3 6.500h3.500M8.500 5q-2 3.500 0 7M12.500 5q2 3.500 0 7M9 6.500l3 4M12 6.500l-3 4" fill="none" stroke="#1040b0"></path>`)],
  ['circle', pic(svg`${frame}<circle cx="8" cy="8" r="3.500" fill="none" stroke="#1050c0"></circle>`)],
  ['-', null],
  ['waves', pic(svg`${frame}<path d="M2 7L4.500 4.500L6 6.500L8.500 4.500L10 6.500L13.500 4" fill="none" stroke="#e00000"></path><path d="M2 12L4.500 9.500L6 11.500L8.500 9.500L10 11.500L13.500 9" fill="none" stroke="#2040ff"></path>`)],
  ['rsi', html`<b class="rsi">RSI</b>`],
  ['split', html`<b class="ess">Ŝ</b>`],
  ['move', pic(svg`<path d="M8 0L11 3.500H9V7H12.500V5L16 8L12.500 11V9H9V12.500H11L8 16L5 12.500H7V9H3.500V11L0 8L3.500 5V7H7V3.500H5Z" fill="#1060d0"></path><rect x="6.500" y="6.500" width="3" height="3" fill="#fff" stroke="#1060d0"></rect>`)],
  ['pencil', pic(svg`<path d="M1 15L2.500 11L5 13.500Z" fill="#555"></path><path d="M2.500 11L10 3.500L12.500 6L5 13.500Z" fill="#f5a030" stroke="#b06010" stroke-width=".6"></path><path d="M10 3.500L12 1.500Q14.500 1 14.500 4L12.500 6Z" fill="#d07060"></path>`)],
  ['-', null],
  ['f5', lettered('F5')],
  ['refresh', pic(svg`${frame}<path d="M3 7.500Q3.500 3.500 8 3.500L9.500 4.500L11 3V8H6.500L8 6.500Q6 5.500 5.500 7.500Z" fill="#50b850"></path><path d="M13 8.500Q12.500 12.500 8 12.500L6.500 11.500L5 13V8.500H9.500L8 9.700Q10 10.500 10.500 8.500Z" fill="#68c868"></path>`)],
];
const PERIODS = ['1', '5', '15', '30', '60', '日', '周', '月', '秒'];

@customElement('tool-bar')
class ToolBar extends LitElement {
  static styles = css`
    :host { display: flex; flex-direction: column; min-height: 0; overflow: hidden; background: #f0f0f0; }
    button { flex: none; height: 22px; border: 0; padding: 0; margin: 0; background: none; color: #003090; font: 12px/22px "Liberation Sans", "Noto Sans CJK SC", sans-serif; display: flex; align-items: center; justify-content: center; }
    svg { display: block; }
    hr { flex: none; width: 100%; height: 1px; margin: 3px 0 4px; border: 0; background: #999; }
    .box { box-sizing: border-box; width: 16px; height: 15px; border: 1px solid #3c78e0; background: #fff; color: #1030c0; font-size: 9px; line-height: 13px; text-align: center; }
    .rsi { color: #3030e0; font-size: 10px; }
    .ess { color: #c82828; font-size: 14px; line-height: 20px; }
    .cjk { font-size: 13px; padding-top: 2px; }
    .on { background: #fafafa; box-shadow: inset 1px 1px #888; }
  `;
  render() {
    return html`
      ${TOOLS.map(([name, icon]) => (name === '-' ? html`<hr />` : html`<button aria-label=${name}>${icon}</button>`))}
      ${PERIODS.map((p, i) => html`<button class=${classMap({ on: p === '日', cjk: i > 4 })}>${p}</button>`)}`;
  }
}

@customElement('app-root')
class AppRoot extends LitElement {
  static styles = css`
    :host { display: grid; grid-template-columns: minmax(0, 1fr) 195px 21px; height: 100vh; overflow: hidden; background: #000; font-family: "Liberation Sans", "Noto Sans CJK SC", sans-serif; }
    main { display: grid; grid-template-rows: 310fr 110fr 105fr 106fr 16px 17px; min-width: 0; min-height: 0; }
  `;
  render() {
    return html`
      <main>
        ${PANES.map((p) => html`<chart-pane .pane=${p}></chart-pane>`)}
        <date-row></date-row>
        <tab-row></tab-row>
      </main>
      <quote-panel></quote-panel>
      <tool-bar></tool-bar>`;
  }
}
